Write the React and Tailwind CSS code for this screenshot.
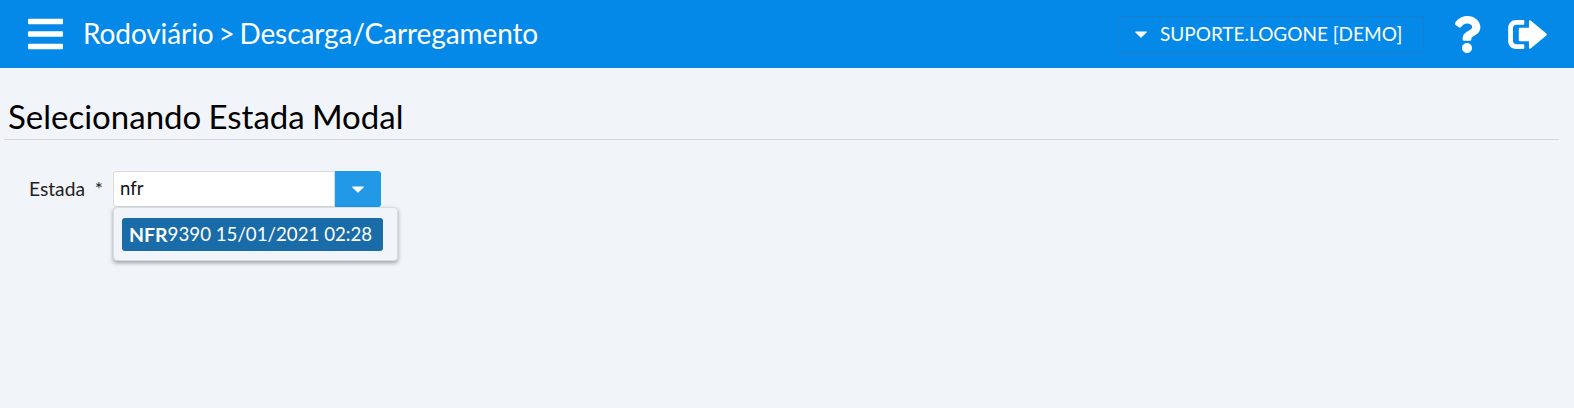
import { FaBars, FaQuestion } from 'react-icons/fa';

function Caret({ className }) {
  return (
    <svg viewBox="0 0 12 7" className={className} fill="currentColor">
      <path d="M0.6 0.4h10.8c.5 0 .7.5.4.9L6.4 6.6c-.2.3-.6.3-.8 0L.2 1.3C-.1.9.1.4.6.4z" />
    </svg>
  );
}

function SignOut({ className }) {
  return (
    <svg viewBox="0 0 40 30" className={className} fill="currentColor">
      <path d="M8 0h7.5c.8 0 1.2.4 1.2 1.2v2.6c0 .8-.4 1.2-1.2 1.2H8.2C6.4 5 5 6.400 5 8.200v13.600C5 23.600 6.400 25 8.200 25h7.300c.8 0 1.200.4 1.200 1.200v2.600c0 .8-.4 1.200-1.200 1.200H8c-4.400 0-8-3.600-8-8V8c0-4.400 3.600-8 8-8z" />
      <path d="M21.500 1.200c0-.9 1-1.400 1.700-.7L39.500 14c.6.600.6 1.500 0 2.100L23.200 29.500c-.7.700-1.700.2-1.700-.7V22h-9.300c-.7 0-1.200-.5-1.200-1.200V9.200c0-.7.500-1.200 1.200-1.200h9.300V1.200z" />
    </svg>
  );
}

export default function App() {
  return (
    <div className="min-h-[408px] bg-[#f1f4f9] font-['Lato',sans-serif] text-[#111]">
      <header className="flex h-[68px] items-center bg-[#0589e8] text-white">
        <FaBars className="ml-[28px] h-[40px] w-[35px]" />
        <h1 className="ml-[20px] pb-[2px] text-[28px] leading-none font-normal tracking-[-0.1px] [word-spacing:-2.2px]">Rodoviário &gt; Descarga/Carregamento</h1>
        <div className="ml-auto flex items-center">
          <button className="flex h-[37px] w-[306px] items-center rounded-[3px] border border-[#1a7fcb] pl-[16px] text-[19px]">
            <Caret className="mr-[13px] h-[7px] w-[12px]" />
            SUPORTE.LOGONE [DEMO]
          </button>
          <FaQuestion className="ml-[29px] h-[37px] w-[28px]" />
          <SignOut className="mr-[27px] ml-[27px] h-[29px] w-[39px]" />
        </div>
      </header>
      <main className="pt-[29px]">
        <div className="mr-[15px] ml-[4px] border-b border-[#d4d7db] pb-[4px] pl-[4px] text-[33px] leading-[38px] text-black [word-spacing:-1.2px]">Selecionando Estada Modal</div>
        <div className="mt-[31px] flex items-start pl-[29px]">
          <label className="w-[84px] pt-[8px] text-[19.2px] leading-[20px] text-[#222]">Estada&nbsp; *</label>
          <div className="relative">
            <div className="flex h-[36px] w-[268px]">
              <div className="flex flex-1 items-center rounded-l-[3px] border border-[#d8dbe0] bg-white pl-[6px] text-[18.5px]">nfr</div>
              <div className="flex w-[46px] items-center justify-center rounded-r-[3px] bg-[#2299e6] text-white">
                <Caret className="h-[7px] w-[12px]" />
              </div>
            </div>
            <div className="absolute top-[36px] left-0 w-[285px] rounded-[4px] border border-[#d8dbe0] bg-[#f1f4f9] pt-[10px] pr-[14px] pb-[9px] pl-[8px] shadow-[0_2px_4px_rgba(0,0,0,0.35)]">
              <div className="flex h-[33px] items-center rounded-[3px] bg-[#1a6ca8] pl-[7px] text-[18.7px] whitespace-pre text-white">
                <b className="text-[19.5px] font-bold">NFR</b>9390 15/01/2021 02:28
              </div>
            </div>
          </div>
        </div>
      </main>
    </div>
  );
}
